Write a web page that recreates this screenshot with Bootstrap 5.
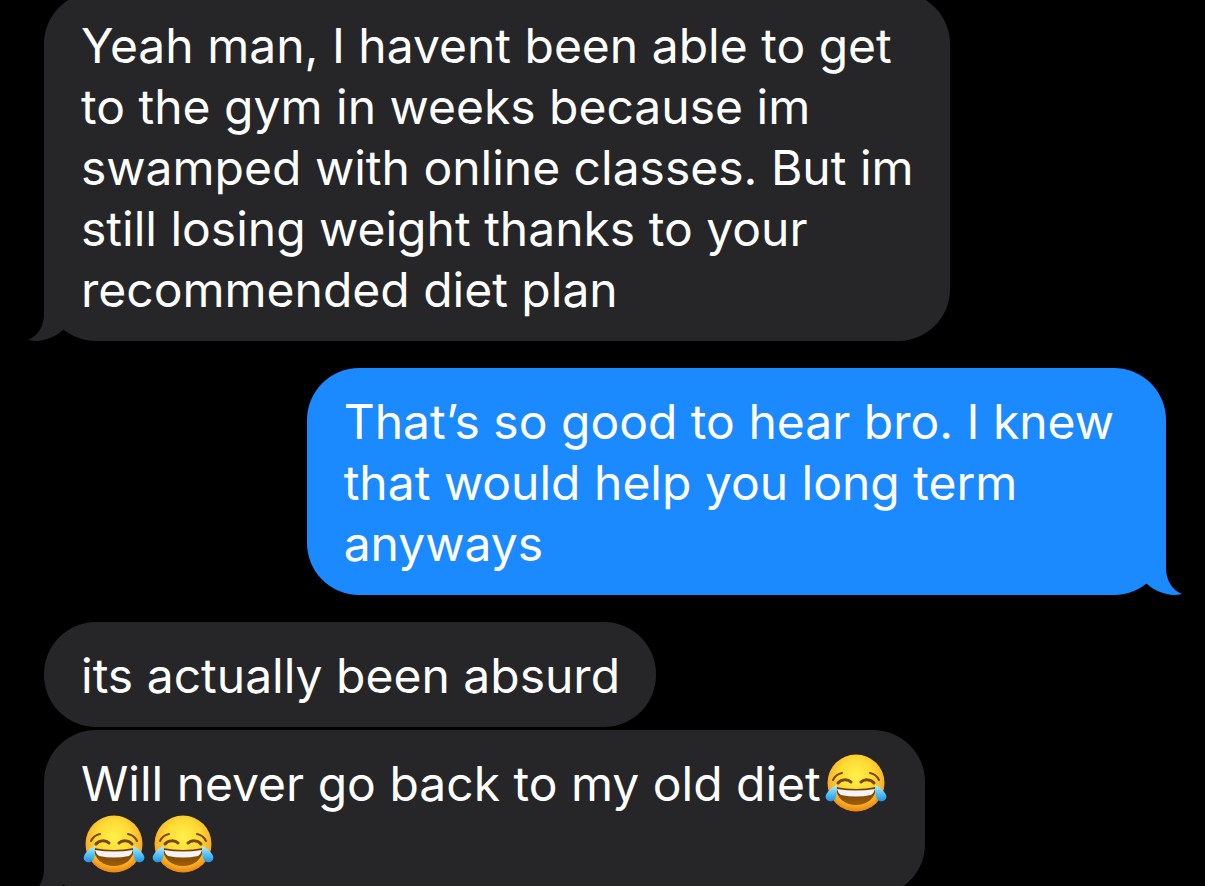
<!DOCTYPE html>
<html lang="en">
<head>
<meta charset="utf-8">
<meta name="viewport" content="width=device-width, initial-scale=1">
<title>Messages</title>
<link href="https://cdn.jsdelivr.net/npm/bootstrap@5.3.0/dist/css/bootstrap.min.css" rel="stylesheet">
<style>
  body { background: #000; font-family: Inter, "Liberation Sans", sans-serif; }
  .thread { height: 100vh; padding: 0 39px 0 44px; }
  .thread-list { margin-top: -8px; }
  .bubble { padding: 23px 36px 21px 37px; border-radius: 52px; font-size: 48px; line-height: 61px; white-space: nowrap; }
  .received { background: #262628; color: #262628; }
  .sent { background: #1b89ff; color: #1b89ff; padding-right: 52px; }
  .bubble p { color: #fff; }
  .turn { margin-top: 27px; }
  .follow { margin-top: 3px; }
  .tail { bottom: 0; width: 60px; height: 60px; fill: currentColor; }
  .received .tail { left: -16px; }
  .sent .tail { right: -16px; transform: scaleX(-1); }
  .emoji { width: 62px; height: 58px; margin: 0 5px 0 2px; vertical-align: -11px; }
  .emoji.first { margin: 0 2px 0 4px; }
</style>
</head>
<body>
<svg width="0" height="0" class="position-absolute" aria-hidden="true">
  <defs>
    <radialGradient id="skin" cx="50%" cy="38%" r="62%">
      <stop offset="0" stop-color="#fff04a"/><stop offset=".5" stop-color="#ffd933"/><stop offset=".82" stop-color="#f9ae25"/><stop offset="1" stop-color="#e98512"/>
    </radialGradient>
    <linearGradient id="drop" x1="0" y1="0" x2="0" y2="1">
      <stop offset="0" stop-color="#b9edff"/><stop offset=".5" stop-color="#58c5f7"/><stop offset="1" stop-color="#1f93e4"/>
    </linearGradient>
    <linearGradient id="mouth" x1="0" y1="0" x2="0" y2="1">
      <stop offset="0" stop-color="#6b3a05"/><stop offset="1" stop-color="#a05f0a"/>
    </linearGradient>
    <symbol id="joy" viewBox="0 0 62 58">
      <circle cx="31" cy="29" r="28.5" fill="url(#skin)"/>
      <path d="M11 33Q31 37 51 33C51 44 42 51 31 51S11 44 11 33Z" fill="url(#mouth)"/>
      <path d="M12 35Q31 38 50 35Q49 39 46 41Q31 44 16 41Q13 39 12 35Z" fill="#f4f4f6"/>
      <g fill="none" stroke="#7a4508" stroke-linecap="round">
        <path d="M13 29C16 25 23 25 26 28M36 28C39 25 46 25 49 29" stroke-width="3"/>
        <path d="M8 26Q11 20 17 19M45 19Q51 20 54 26" stroke-width="2"/>
      </g>
      <path id="tear" d="M12 31C9 32 3 36 1 41C-1 46 6 50 10 45C12 42 12 36 12 31Z" fill="url(#drop)"/>
      <use href="#tear" transform="translate(62 0) scale(-1 1)"/>
    </symbol>
    <symbol id="tail" viewBox="0 0 60 60">
      <path d="M16 0V33C16 45 10 55 0 59C13 62 26 57 35 49L60 30Z"/>
    </symbol>
  </defs>
</svg>
<main class="thread overflow-hidden">
  <div class="thread-list d-flex flex-column align-items-start">
    <div class="bubble received position-relative">
      <svg class="tail position-absolute" aria-hidden="true"><use href="#tail"/></svg>
      <p class="mb-0 position-relative">Yeah man, I havent been able to get<br>to the gym in weeks because im<br>swamped with online classes. But im<br>still losing weight thanks to your<br>recommended diet plan</p>
    </div>
    <div class="bubble sent turn position-relative align-self-end">
      <svg class="tail position-absolute" aria-hidden="true"><use href="#tail"/></svg>
      <p class="mb-0 position-relative">That’s so good to hear bro. I knew<br>that would help you long term<br>anyways</p>
    </div>
    <div class="bubble received turn">
      <p class="mb-0">its actually been absurd</p>
    </div>
    <div class="bubble received follow position-relative">
      <svg class="tail position-absolute" aria-hidden="true"><use href="#tail"/></svg>
      <p class="mb-0 position-relative">Will never go back to my old diet<svg class="emoji first" role="img" aria-label="Face with tears of joy"><use href="#joy"/></svg><br><svg class="emoji" role="img" aria-label="Face with tears of joy"><use href="#joy"/></svg><svg class="emoji" role="img" aria-label="Face with tears of joy"><use href="#joy"/></svg></p>
    </div>
  </div>
</main>
<script src="https://cdn.jsdelivr.net/npm/bootstrap@5.3.0/dist/js/bootstrap.bundle.min.js"></script>
</body>
</html>
